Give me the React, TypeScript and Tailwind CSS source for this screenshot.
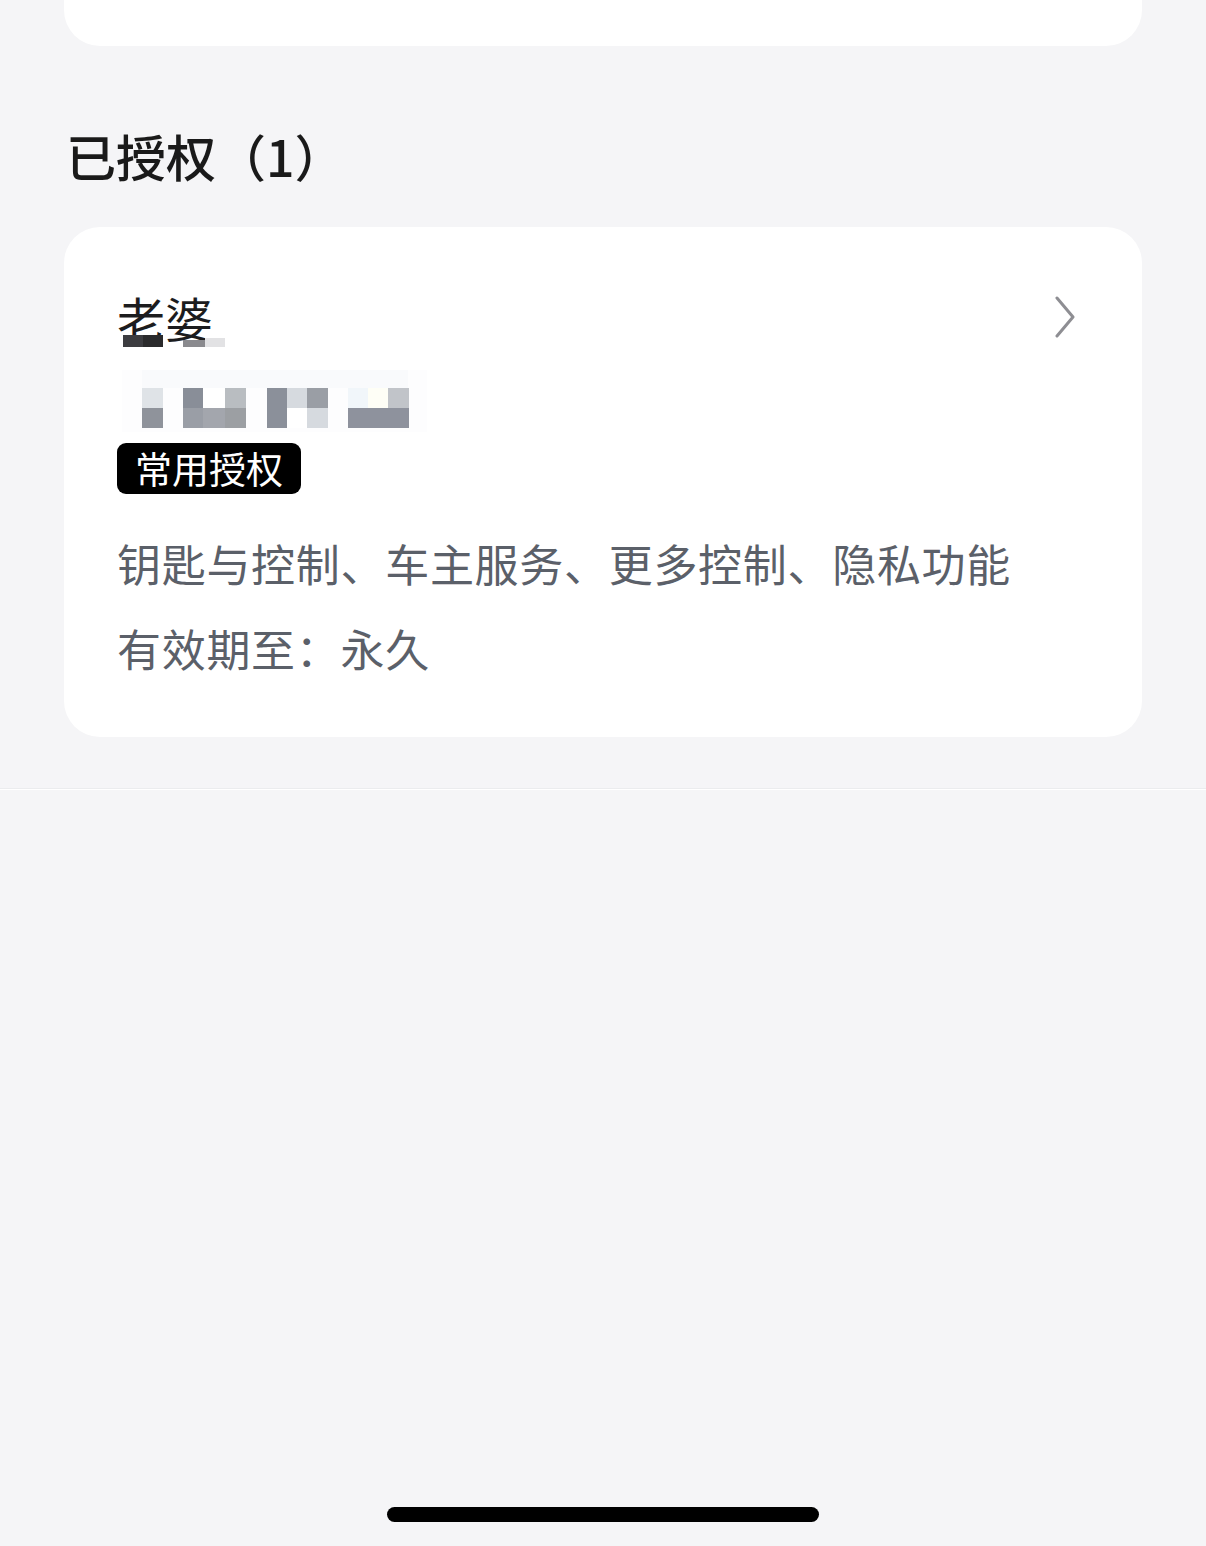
import React from "react";

const FONT = { fontFamily: '"Noto Sans CJK SC", "Noto Sans", sans-serif' };

function Mosaic() {
  const cells: [number, number, string][] = [
    [25, 26, "#dfe3e7"], [25, 46, "#8f939b"],
    [66, 26, "#898e98"], [66, 46, "#9a9ea6"],
    [86, 26, "#ffffff"], [86, 46, "#a3a6ad"],
    [108, 26, "#b9bdc1"], [108, 46, "#9c9fa3"],
    [150, 26, "#8b909a"], [150, 46, "#8b909a"],
    [170, 26, "#d6dadf"], [170, 46, "#ffffff"],
    [190, 26, "#9a9ea5"], [190, 46, "#d6dadf"],
    [231, 26, "#f1f6fa"], [231, 46, "#8e929d"],
    [251, 26, "#fefef6"], [251, 46, "#8e929d"],
    [271, 26, "#c1c4c9"], [271, 46, "#8e929d"],
  ];
  return (
    <svg width="320" height="70" viewBox="0 0 320 70" className="block">
      <rect x="5" y="8" width="305" height="62" fill="#fdfdfe" />
      <rect x="25" y="8" width="266" height="18" fill="#f9fafc" />
      {cells.map(([x, y, c], i) => (
        <rect key={i} x={x} y={y} width={x === 86 || x === 150 ? 22 : 21} height="20" fill={c} />
      ))}
    </svg>
  );
}

export default function App() {
  return (
    <div className="min-h-[1546px] w-full bg-[#f5f5f7] flex flex-col" style={FONT}>
      <div className="mx-[64px] h-[46px] rounded-b-[36px] bg-white" />

      <div className="mx-[66px] mt-[84px] text-[50px] leading-none font-medium text-[#1a1a1a]">
        已授权（1）
      </div>

      <div className="mx-[64px] mt-[47px] rounded-[36px] bg-white pl-[53px] pr-[52px] pt-[66px] pb-[67px]">
        <div className="flex items-center justify-between">
          <div className="relative text-[48px] leading-none text-[#1c1c1e]">
            老婆
            <div className="absolute left-[6px] top-[42px] h-[12px] w-[20px] bg-[#3c3c40]" />
            <div className="absolute left-[26px] top-[42px] h-[12px] w-[20px] bg-[#2a2a2c]" />
            <div className="absolute left-[66px] top-[47px] h-[7px] w-[22px] bg-[#8a8a8e]" />
            <div className="absolute left-[88px] top-[45px] h-[9px] w-[20px] bg-[#e2e2e4]" />
          </div>
          <svg width="22" height="42" viewBox="0 0 22 42" className="mr-[14px]">
            <polyline points="3,2 19,21 3,40" fill="none" stroke="#8e8e93" strokeWidth="3" strokeLinecap="round" strokeLinejoin="round" />
          </svg>
        </div>

        <div className="mt-[21px]">
          <Mosaic />
        </div>

        <div className="mt-[11px] inline-flex h-[51px] items-center rounded-[9px] bg-black px-[18px] text-[37px] leading-none text-white">
          常用授权
        </div>

        <div className="mt-[47px] text-[44px] leading-none tracking-[0.7px] text-[#5b6069]">
          钥匙与控制、车主服务、更多控制、隐私功能
        </div>
        <div className="mt-[41px] text-[44px] leading-none tracking-[0.7px] text-[#5b6069]">
          有效期至：永久
        </div>
      </div>

      <div className="mt-[51px] h-px w-full bg-[#ebecee]" />
      <div className="h-px w-full bg-white" />

      <div className="flex-1" />
      <div className="mb-[24px] flex justify-center">
        <div className="h-[15px] w-[432px] rounded-full bg-black" />
      </div>
    </div>
  );
}
